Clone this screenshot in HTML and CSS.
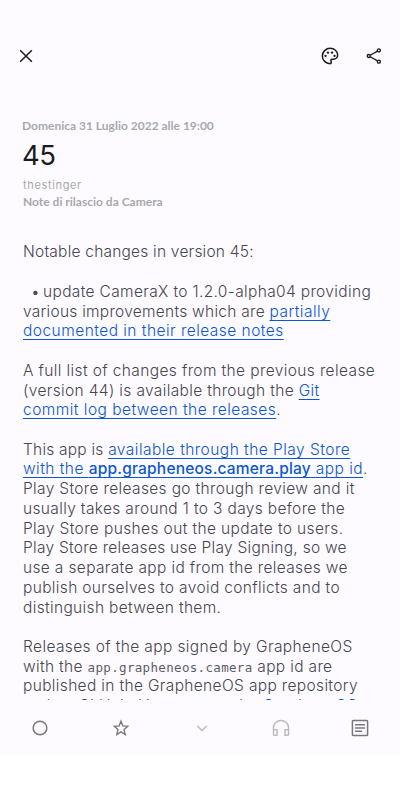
FILE: index.html
```
<!DOCTYPE html>
<html lang="it">
<head>
<meta charset="utf-8">
<title>45</title>
<link rel="stylesheet" href="styles.css">
</head>
<body>
<div class="screen">
  <header class="topbar">
    <svg class="icon close" viewBox="0 0 24 24"><path d="M5 5l14 14M19 5l-14 14"/></svg>
    <svg class="icon palette" viewBox="0 0 24 24"><path d="M12 21.200C7 21.200 2.800 17 2.800 12S7.100 2.800 12.200 2.800c4.900 0 9 3.400 9 8 0 2.900-2.200 5-5 5h-1.800c-.9 0-1.400.7-1.400 1.400 0 .9.6 1.200.6 2.200 0 1-.6 1.800-1.600 1.800z"/><g class="dots"><circle cx="6.600" cy="11.800" r="1.400"/><circle cx="9.500" cy="7.900" r="1.400"/><circle cx="14.500" cy="7.900" r="1.400"/><circle cx="17.400" cy="11.800" r="1.400"/></g></svg>
    <svg class="icon share" viewBox="0 0 24 24"><circle cx="18.500" cy="4.500" r="2"/><circle cx="5" cy="12" r="2"/><circle cx="18.500" cy="19.500" r="2"/><path d="M6.800 11l9.900-5.500M6.800 13l9.900 5.500"/></svg>
  </header>
  <main class="article">
    <div class="date">Domenica 31 Luglio 2022 alle 19:00</div>
    <h1 class="title">45</h1>
    <div class="author">thestinger</div>
    <div class="feed">Note di rilascio da Camera</div>
    <div class="content">
      <p><span class="line tight">Notable changes in version 45:</span></p>
      <p><span class="line item"><span class="bullet">•</span>update CameraX to 1.2.0-alpha04 providing</span>
      <span class="line snug">various improvements which are <a class="widest">partially</a></span>
      <span class="line widest"><a>documented in their release notes</a></span></p>
      <p><span class="line wide">A full list of changes from the previous release</span>
      <span class="line">(version 44) is available through the <a>Git</a></span>
      <span class="line widest"><a>commit log between the releases</a>.</span></p>
      <p><span class="line tight">This app is <a class="widest">available through the Play Store</a></span>
      <span class="line widest"><a>with the <b>app.grapheneos.camera.play</b> app id</a>.</span>
      <span class="line">Play Store releases go through review and it</span>
      <span class="line">usually takes around 1 to 3 days before the</span>
      <span class="line wide">Play Store pushes out the update to users.</span>
      <span class="line snug">Play Store releases use Play Signing, so we</span>
      <span class="line">use a separate app id from the releases we</span>
      <span class="line">publish ourselves to avoid conflicts and to</span>
      <span class="line">distinguish between them.</span></p>
      <p><span class="line wide">Releases of the app signed by GrapheneOS</span>
      <span class="line">with the <code>app.grapheneos.camera</code> app id are</span>
      <span class="line">published in the GrapheneOS app repository</span>
      <span class="line tight">and on GitHub. You can use the <a>GrapheneOS</a></span></p>
    </div>
  </main>
  <nav class="bottombar">
    <svg class="icon" viewBox="0 0 24 24"><circle cx="12" cy="12" r="8.200"/></svg>
    <svg class="icon star" viewBox="0 0 24 24"><path d="M12 3.800l2.200 5.600 6 .5-4.600 4 1.400 5.900-5-3.200-5 3.200 1.400-5.900-4.600-4 6-.5z"/></svg>
    <svg class="icon faded" viewBox="0 0 24 24"><path d="M6.500 9.500L12 15l5.500-5.500"/></svg>
    <svg class="icon faded" viewBox="0 0 24 24"><path d="M3 14v-2.500a9 8.600 0 0 1 18 0V14M3 14h4.200v6.800H4.200A1.200 1.200 0 0 1 3 19.600zM21 14h-4.200v6.800h3a1.200 1.200 0 0 0 1.200-1.200z"/></svg>
    <svg class="icon" viewBox="0 0 24 24"><rect x="2.900" y="2.900" width="18.200" height="18.200" rx="1"/><path d="M6 8h12M6 12h12M6 16h8.500"/></svg>
  </nav>
</div>
</body>
</html>
```
FILE: styles.css
```
body {
  margin: 0;
  background: #fff;
}
.screen {
  display: flex;
  flex-direction: column;
  height: 755px;
  background: #fdfbff;
}
.topbar {
  display: flex;
  align-items: center;
  height: 32px;
  padding: 40px 16px 0 16px;
}
.icon {
  width: 20px;
  height: 20px;
  fill: none;
  stroke: #1b1b1f;
  stroke-width: 1.8;
}
.palette { margin-left: auto; }
.share { width: 18px; margin: 0 1px 0 25px; stroke-width: 1.8; }
.dots { fill: #1b1b1f; stroke: none; }
.article {
  flex: 1;
  min-height: 0;
  overflow: hidden;
  padding: 46px 0 0 22px;
  white-space: nowrap;
}
.date, .feed {
  font: 700 12px/16px Lato, sans-serif;
  color: #a9a8ad;
}
.title {
  margin: 3px 0 0;
  font: 400 27.5px/36px Inter, sans-serif;
  letter-spacing: -.4px;
  color: #1b1b1f;
}
.author {
  margin-top: 4px;
  padding-left: 1px;
  font: 400 11px/16px Inter, sans-serif;
  letter-spacing: .65px;
  color: #a9a8ad;
}
.feed { padding: 1px 0 0 1px; }
.content {
  margin-top: 32.4px;
  padding-left: 1px;
  font: 300 15.5px/19.73px Inter, sans-serif;
  letter-spacing: .35px;
  color: #46464f;
}
p { margin: 0 0 19.73px; }
.line { display: block; }
.tight { letter-spacing: .22px; }
.snug { letter-spacing: .27px; }
.wide { letter-spacing: .385px; }
.widest { letter-spacing: .47px; }
.item { padding-left: 9px; }
.bullet { display: inline-block; width: 11px; text-indent: -1px; }
a {
  color: #0b57d0;
  text-decoration: underline;
  text-decoration-thickness: 1px;
  text-underline-offset: 3px;
  text-decoration-skip-ink: none;
}
b { font-weight: 500; letter-spacing: .2px; }
code {
  font: 400 12.5px "DejaVu Sans Mono", monospace;
  letter-spacing: .33px;
  color: #5c5c65;
}
.bottombar {
  display: flex;
  align-items: center;
  justify-content: space-between;
  height: 55px;
  padding: 0 30px;
}
.bottombar .icon { stroke: #777680; }
.bottombar .icon:nth-child(2), .bottombar .icon:nth-child(4) { translate: 1px 0; }
.bottombar .icon:nth-child(3) { translate: 2px 0; }
.bottombar .star { stroke-width: 1.6; }
.bottombar .faded { stroke: #bbbac0; }
```
